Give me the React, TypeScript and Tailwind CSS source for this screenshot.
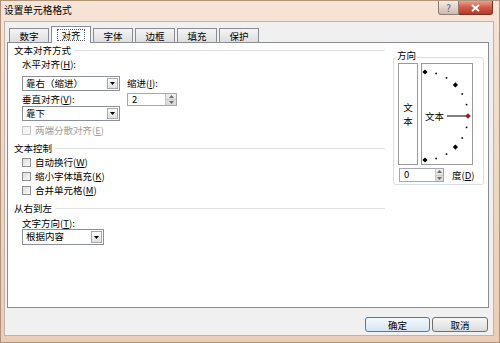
import React from "react";

function U({ c }: { c: string }) {
  return <span className="underline">{c}</span>;
}

function Header({ label }: { label: string }) {
  return (
    <div className="flex items-center h-[12px] leading-[12px]">
      <span>{label}</span>
      <div className="ml-[3px] flex-1 h-px bg-[#dcdfe3]" />
    </div>
  );
}

function Arrow() {
  return (
    <svg width="5" height="3" viewBox="0 0 5 3">
      <path d="M0 0H5L2.5 3Z" fill="#000" />
    </svg>
  );
}

function Combo({ text, cls }: { text: string; cls: string }) {
  return (
    <div className={"flex border border-[#8a8f98] bg-white " + cls}>
      <span className="flex-1 pl-[3px] leading-[13px] whitespace-nowrap">{text}</span>
      <div className="m-px w-[11px] border border-[#a9a9a9] bg-gradient-to-b from-[#fbfbfb] to-[#e0e0e0] flex items-center justify-center">
        <Arrow />
      </div>
    </div>
  );
}

function Spin({ value, cls, btn }: { value: string; cls: string; btn: string }) {
  return (
    <div className={"flex border border-[#a3a8b0] bg-white " + cls}>
      <span className="flex-1 pl-[4px] leading-[11px]">{value}</span>
      <div className={"flex flex-col bg-gradient-to-b from-[#eeeeee] to-[#d8d8d8] border-l border-[#c8c8c8] " + btn}>
        <div className="flex-1 flex items-center justify-center border-b border-[#c8c8c8]">
          <svg width="5" height="3" viewBox="0 0 5 3">
            <path d="M0 3H5L2.5 0Z" fill="#6b6b6b" />
          </svg>
        </div>
        <div className="flex-1 flex items-center justify-center">
          <svg width="5" height="3" viewBox="0 0 5 3">
            <path d="M0 0H5L2.5 3Z" fill="#6b6b6b" />
          </svg>
        </div>
      </div>
    </div>
  );
}

function Check({ label, acc, disabled }: { label: string; acc: string; disabled?: boolean }) {
  return (
    <div className={"flex items-center h-[14px] " + (disabled ? "text-[#a0a0a0]" : "")}>
      <div
        className={
          "w-[9px] h-[9px] border " +
          (disabled
            ? "border-[#c9c9c9] bg-[#f4f4f4]"
            : "border-[#8e8f8f] bg-gradient-to-br from-[#dcdcdc] to-[#fafafa]")
        }
      />
      <span className="ml-[4px] leading-[12px]">
        {label}(<U c={acc} />)
      </span>
    </div>
  );
}

function Dial() {
  const pts: { x: number; y: number; a: number }[] = [];
  for (let a = 90; a >= -90; a -= 15) {
    const r = (a * Math.PI) / 180;
    pts.push({ x: 3 + 43 * Math.cos(r), y: 52 - 44 * Math.sin(r), a });
  }
  return (
    <svg width="50" height="100" viewBox="0 0 50 100">
      {pts.map((p, i) => {
        if (p.a === 0) return null;
        const big = Math.abs(p.a) === 90 || Math.abs(p.a) === 45;
        if (big) {
          const s = 2.6;
          return (
            <path
              key={i}
              d={`M${p.x} ${p.y - s}L${p.x + s} ${p.y}L${p.x} ${p.y + s}L${p.x - s} ${p.y}Z`}
              fill="#000"
            />
          );
        }
        return <rect key={i} x={p.x - 0.8} y={p.y - 0.8} width="1.6" height="1.6" fill="#000" />;
      })}
      <text
        x="3"
        y="55.5"
        fontSize="9.5"
        fill="#000"
        fontFamily='"Noto Sans CJK SC", sans-serif'
      >
        文本
      </text>
      <line x1="25" y1="52" x2="45" y2="52" stroke="#000" strokeWidth="1" />
      <path d="M46 49.3L48.7 52L46 54.7L43.3 52Z" fill="#9b1b1b" />
    </svg>
  );
}

export default function App() {
  const tabs = ["数字", "对齐", "字体", "边框", "填充", "保护"];
  return (
    <div className="w-[500px] h-[343px] flex flex-col bg-gradient-to-b from-[#f6e4d7] via-[#efd7c4] to-[#e9cdb7] border border-[#b3927b] font-['Noto_Sans_CJK_SC',sans-serif] text-[9.5px] text-black overflow-hidden">
      {/* title bar */}
      <div className="h-[20px] flex items-start">
        <div className="pl-[3px] pt-[3px] leading-[12px] text-[9.7px] flex-1">设置单元格格式</div>
        <div className="flex mr-[6px]">
          <div className="w-[21px] h-[14px] border border-[#8f7b70] border-t-0 rounded-bl-[3px] bg-gradient-to-b from-[#f4ebe6] to-[#cdbbb0] flex items-center justify-center text-[#5d5d6a] text-[10px] leading-[10px]">
            ?
          </div>
          <div className="w-[34px] h-[14px] border border-[#7b2f25] border-t-0 border-l-0 rounded-br-[3px] bg-gradient-to-b from-[#e8a190] via-[#cf5a45] to-[#b63a28] flex items-center justify-center">
            <svg width="9" height="8" viewBox="0 0 9 8">
              <path d="M1 1L8 7M8 1L1 7" stroke="#fff" strokeWidth="2" />
            </svg>
          </div>
        </div>
      </div>

      {/* client */}
      <div className="flex-1 ml-[3px] mr-[5px] mb-[6px] bg-[#f0f0f0] border border-[#c4b2a6] flex flex-col">
        {/* tabs */}
        <div className="flex items-end h-[16px] mt-[4px] ml-[4px] gap-[2px]">
          {tabs.map((t) =>
            t === "对齐" ? (
              <div
                key={t}
                className="relative z-10 w-[40px] h-[17px] -mb-px bg-white border border-b-0 border-[#898c95] flex items-center justify-center"
              >
                <span className="px-[3px] leading-[10px] border border-dotted border-[#555]">{t}</span>
              </div>
            ) : (
              <div
                key={t}
                className="w-[40px] h-[14px] bg-gradient-to-b from-[#f4f4f4] to-[#dedede] border border-b-0 border-[#898c95] flex items-center justify-center leading-[12px]"
              >
                {t}
              </div>
            )
          )}
        </div>

        {/* panel */}
        <div className="ml-[2px] mr-[4px] h-[266px] bg-white border border-[#898c95] flex items-start pl-[6px]">
          {/* left column */}
          <div className="w-[371px] pt-[1px] flex flex-col">
            <Header label="文本对齐方式" />
            <div className="flex ml-[8px] mt-[2px]">
              <div className="w-[98px] flex flex-col">
                <div className="h-[12px] leading-[12px]">
                  水平对齐(<U c="H" />):
                </div>
                <Combo text="靠右（缩进）" cls="mt-[6px] h-[15px] w-[98px]" />
                <div className="mt-[2px] h-[12px] leading-[12px]">
                  垂直对齐(<U c="V" />):
                </div>
                <Combo text="靠下" cls="mt-[1px] h-[15px] w-[98px]" />
              </div>
              <div className="ml-[7px] flex flex-col">
                <div className="mt-[19px] h-[12px] leading-[12px]">
                  缩进(<U c="I" />):
                </div>
                <Spin value="2" cls="mt-[4px] w-[50px] h-[13px]" btn="w-[11px]" />
              </div>
            </div>
            <div className="ml-[8px] mt-[2px]">
              <Check label="两端分散对齐" acc="E" disabled />
            </div>
            <div className="mt-[5px]">
              <Header label="文本控制" />
            </div>
            <div className="ml-[8px] mt-[1px] flex flex-col">
              <Check label="自动换行" acc="W" />
              <Check label="缩小字体填充" acc="K" />
              <Check label="合并单元格" acc="M" />
            </div>
            <div className="mt-[5px]">
              <Header label="从右到左" />
            </div>
            <div className="ml-[8px] mt-[3px] h-[12px] leading-[12px]">
              文字方向(<U c="T" />):
            </div>
            <div className="ml-[8px]">
              <Combo text="根据内容" cls="h-[16px] w-[82px]" />
            </div>
          </div>

          {/* right group */}
          <div className="relative ml-[8px] mt-[14px] w-[91px] h-[128px] border border-[#d5dfe5] rounded-[3px] pl-[4px] pt-[5px] flex flex-col">
            <span className="absolute -top-[9px] left-[2px] bg-white px-px leading-[12px]">方向</span>
            <div className="flex">
              <div className="w-[20px] h-[102px] border border-[#9a9a9a] flex flex-col items-center justify-center">
                <div className="leading-[14px]">文</div>
                <div className="leading-[14px]">本</div>
              </div>
              <div className="ml-[3px] w-[52px] h-[102px] border border-[#9a9a9a]">
                <Dial />
              </div>
            </div>
            <div className="mt-[3px] ml-px flex items-center">
              <Spin value="0" cls="w-[45px] h-[14px]" btn="w-[8px]" />
              <span className="ml-[8px] leading-[12px]">
                度(<U c="D" />)
              </span>
            </div>
          </div>
        </div>

        {/* buttons */}
        <div className="mt-[9px] mr-[5px] flex justify-end gap-[2px]">
          <div className="w-[65px] h-[15px] rounded-[3px] border border-[#3c7fb1] bg-gradient-to-b from-[#f4f9fd] to-[#d6e6f3] flex items-center justify-center leading-[12px]">
            确定
          </div>
          <div className="w-[56px] h-[15px] rounded-[3px] border border-[#707070] bg-gradient-to-b from-[#f6f6f6] to-[#dcdcdc] flex items-center justify-center leading-[12px]">
            取消
          </div>
        </div>
      </div>
    </div>
  );
}
